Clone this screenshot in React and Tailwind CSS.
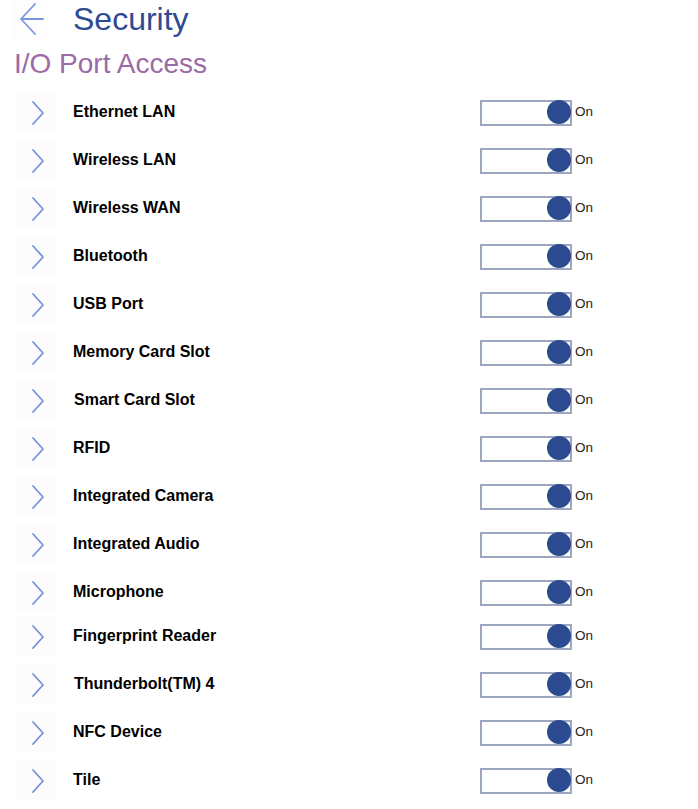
import React from "react";

const items = [
  "Ethernet LAN",
  "Wireless LAN",
  "Wireless WAN",
  "Bluetooth",
  "USB Port",
  "Memory Card Slot",
  "Smart Card Slot",
  "RFID",
  "Integrated Camera",
  "Integrated Audio",
  "Microphone",
  "Fingerprint Reader",
  "Thunderbolt(TM) 4",
  "NFC Device",
  "Tile",
];

function Row({ label }) {
  const short = label === "Fingerprint Reader";
  const shift = label === "Smart Card Slot" || label === "Thunderbolt(TM) 4";
  return (
    <div className={short ? "flex h-[44px] items-center pb-[4px]" : "flex h-[48px] items-center"}>
      <div className="ml-[17px] flex h-[40px] w-[40px] items-center justify-center bg-[#fcfcfc]">
        <svg width="14" height="26" viewBox="0 0 14 26" className="ml-[1px] mt-[2px]">
          <path d="M2 2 L12 13 L2 24" fill="none" stroke="#7391dc" strokeWidth="1.8" strokeLinecap="round" strokeLinejoin="round" />
        </svg>
      </div>
      <div className={shift ? "ml-[17px] w-[406px] text-[16px] font-bold text-black" : "ml-[16px] w-[407px] text-[16px] font-bold text-black"}>
        {label}
      </div>
      <div className="relative mt-[2px] h-[26px] w-[92px] border-2 border-[#9ba7c1] bg-white">
        <div className="absolute right-[-1px] top-[-2px] h-[24px] w-[24px] rounded-full bg-[#2b4a8f]" />
      </div>
      <div className="ml-[3px] mt-[1px] text-[13.5px] text-[#222]">On</div>
    </div>
  );
}

export default function App() {
  return (
    <div className="min-h-[809px] w-[698px] bg-white" style={{ fontFamily: '"Liberation Sans", Arial, sans-serif' }}>
      <div className="flex h-[38px] items-center">
        <div className="ml-[13px] flex h-[38px] w-[36px] items-center justify-center bg-[#fdfdfd]">
          <svg width="26" height="34" viewBox="0 0 26 34">
            <path d="M17 2 L3 17 L17 32 M3 17 L25 17" fill="none" stroke="#7a96e0" strokeWidth="1.8" strokeLinecap="round" strokeLinejoin="round" />
          </svg>
        </div>
        <div className="ml-[24px] text-[32px] leading-none text-[#2e4b92]">Security</div>
      </div>
      <div className="flex h-[50px] items-center pl-[14px] pt-[2px]">
        <div className="text-[28px] leading-none text-[#9b6aa7]">I/O Port Access</div>
      </div>
      <div>
        {items.map((it) => (
          <Row key={it} label={it} />
        ))}
      </div>
    </div>
  );
}
